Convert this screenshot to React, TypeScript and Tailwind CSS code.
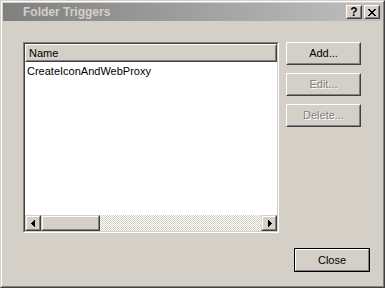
import React from "react";

function Raised({ className = "", innerClassName = "", children }: { className?: string; innerClassName?: string; children?: React.ReactNode }) {
  return (
    <div className={`border border-t-white border-l-white border-r-[#404040] border-b-[#404040] ${className}`}>
      <div className={`w-full h-full border border-t-[#d4d0c8] border-l-[#d4d0c8] border-r-[#808080] border-b-[#808080] bg-[#d4d0c8] flex items-center justify-center ${innerClassName}`}>
        {children}
      </div>
    </div>
  );
}

function ScrollRaised({ className = "", children }: { className?: string; children?: React.ReactNode }) {
  return (
    <div className={`border border-t-[#d4d0c8] border-l-[#d4d0c8] border-r-[#404040] border-b-[#404040] shrink-0 ${className}`}>
      <div className="w-full h-full border border-t-white border-l-white border-r-[#808080] border-b-[#808080] bg-[#d4d0c8] flex items-center justify-center">
        {children}
      </div>
    </div>
  );
}

function LeftArrow() {
  return (
    <svg width="4" height="7" viewBox="0 0 4 7" shapeRendering="crispEdges" className="block -ml-[1px]">
      <rect x="0" y="3" width="1" height="1" fill="#000" />
      <rect x="1" y="2" width="1" height="3" fill="#000" />
      <rect x="2" y="1" width="1" height="5" fill="#000" />
      <rect x="3" y="0" width="1" height="7" fill="#000" />
    </svg>
  );
}

function RightArrow() {
  return (
    <svg width="4" height="7" viewBox="0 0 4 7" shapeRendering="crispEdges" className="block ml-[1px]">
      <rect x="3" y="3" width="1" height="1" fill="#000" />
      <rect x="2" y="2" width="1" height="3" fill="#000" />
      <rect x="1" y="1" width="1" height="5" fill="#000" />
      <rect x="0" y="0" width="1" height="7" fill="#000" />
    </svg>
  );
}

function CloseGlyph() {
  const rows = [
    "XX....XX",
    ".XX..XX.",
    "..XXXX..",
    "...XX...",
    "..XXXX..",
    ".XX..XX.",
    "XX....XX",
  ];
  const rects: React.ReactNode[] = [];
  rows.forEach((r, y) =>
    r.split("").forEach((c, x) => {
      if (c === "X") rects.push(<rect key={`${x}-${y}`} x={x} y={y} width="1" height="1" fill="#000" />);
    })
  );
  return (
    <svg width="8" height="7" viewBox="0 0 8 7" shapeRendering="crispEdges" className="block">
      {rects}
    </svg>
  );
}

function PushButton({ label, disabled = false }: { label: string; disabled?: boolean }) {
  return (
    <Raised className="w-[75px] h-[23px]">
      <span className={disabled ? "text-[#808080] [text-shadow:1px_1px_0_#ffffff]" : "text-black"}>{label}</span>
    </Raised>
  );
}

export default function App() {
  return (
    <div className="w-[385px] h-[288px] bg-[#d4d0c8] border border-t-[#d4d0c8] border-l-[#d4d0c8] border-r-[#404040] border-b-[#404040] font-['Liberation_Sans',Arial,sans-serif] text-[11px] text-black select-none">
      <div className="h-full border border-t-white border-l-white border-r-[#808080] border-b-[#808080] p-px flex flex-col">
        {/* Title bar */}
        <div className="h-[18px] shrink-0 flex items-center bg-linear-to-r from-[#808080] to-[#c0c0c0] pl-[20px] pr-[2px]">
          <span className="flex-1 font-bold text-[#d4d0c8] text-[12px] leading-[18px]">Folder Triggers</span>
          <div className="flex gap-[2px]">
            <Raised className="w-[16px] h-[14px]">
              <span className="font-bold text-[12px] leading-none text-black">?</span>
            </Raised>
            <Raised className="w-[16px] h-[14px]">
              <CloseGlyph />
            </Raised>
          </div>
        </div>

        {/* Content */}
        <div className="flex flex-col pl-[20px] pt-[21px]">
          <div className="flex">
            {/* List box */}
            <div className="w-[256px] h-[191px] border border-t-[#808080] border-l-[#808080] border-r-white border-b-white">
              <div className="w-full h-full border border-t-[#404040] border-l-[#404040] border-r-[#d4d0c8] border-b-[#d4d0c8] bg-white flex flex-col">
                <div className="h-[18px] shrink-0 border border-t-white border-l-white border-r-[#404040] border-b-[#404040]">
                  <div className="w-full h-full border border-transparent border-r-[#808080] border-b-[#808080] bg-[#d4d0c8] flex items-center pl-[2px]">
                    <span className="leading-none">Name</span>
                  </div>
                </div>
                <div className="pl-[2px] pt-[2px] leading-[14px]">CreateIconAndWebProxy</div>
                <div className="mt-auto h-[16px] flex">
                  <ScrollRaised className="w-[16px] h-[16px]">
                    <LeftArrow />
                  </ScrollRaised>
                  <ScrollRaised className="w-[59px] h-[16px]" />
                  <div className="flex-1 h-[16px] bg-[image:repeating-conic-gradient(#d4d0c8_0_25%,#ffffff_0_50%)] bg-[length:2px_2px]" />
                  <ScrollRaised className="w-[16px] h-[16px]">
                    <RightArrow />
                  </ScrollRaised>
                </div>
              </div>
            </div>

            {/* Buttons */}
            <div className="ml-[7px] flex flex-col gap-[8px]">
              <PushButton label="Add..." />
              <PushButton label="Edit..." disabled />
              <PushButton label="Delete..." disabled />
            </div>
          </div>

          <div className="flex justify-end pr-[12px] mt-[15px]">
            <div className="w-[76px] h-[24px] border border-black">
              <div className="w-full h-full border border-t-white border-l-white border-r-[#808080] border-b-[#808080] bg-[#d4d0c8] flex items-center justify-center">
                <span>Close</span>
              </div>
            </div>
          </div>
        </div>
      </div>
    </div>
  );
}
